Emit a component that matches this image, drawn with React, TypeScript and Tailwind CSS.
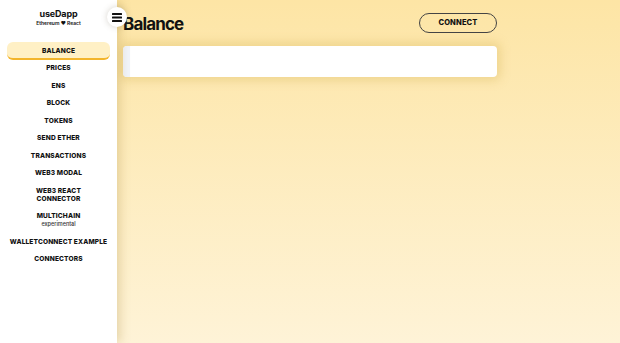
import React from 'react';

const navItems: { label: string[]; sub?: string }[] = [
  { label: ['Balance'] },
  { label: ['Prices'] },
  { label: ['ENS'] },
  { label: ['Block'] },
  { label: ['Tokens'] },
  { label: ['Send Ether'] },
  { label: ['Transactions'] },
  { label: ['Web3 Modal'] },
  { label: ['Web3 React', 'Connector'] },
  { label: ['Multichain'], sub: 'experimental' },
  { label: ['WalletConnect Example'] },
  { label: ['Connectors'] },
];

const MenuIcon = () => (
  <svg width="10" height="9" viewBox="0 0 10 9" fill="#111">
    <rect x="0" y="0" width="10" height="2" rx="0.5" />
    <rect x="0" y="3.5" width="10" height="2" rx="0.5" />
    <rect x="0" y="7" width="10" height="2" rx="0.5" />
  </svg>
);

export default function App() {
  return (
    <div
      className="flex h-[343px] w-[620px] overflow-hidden text-[#111]"
      style={{ fontFamily: 'Inter, "Liberation Sans", sans-serif' }}
    >
      {/* Sidebar */}
      <aside className="relative z-10 w-[117px] shrink-0 bg-white px-[7px] shadow-[3px_0_10px_rgba(170,140,60,0.3)]">
        <div className="flex flex-col items-center pt-[8px]">
          <div className="text-[9px] font-bold leading-[12px] tracking-[-0.02em]">useDapp</div>
          <div className="text-[5px] font-semibold leading-[7px]">Ethereum ❤︎ React</div>
        </div>

        <nav className="mt-[15px] flex flex-col">
          {navItems.map((item, i) => (
            <div
              key={i}
              className={
                i === 0
                  ? 'flex flex-col items-center rounded-md border-b-2 border-[#f3b52c] bg-[#fff0c5] pt-[4.75px] pb-[2.75px]'
                  : 'flex flex-col items-center py-[4.75px]'
              }
            >
              {item.label.map((l) => (
                <span key={l} className="text-[6.6px] font-extrabold uppercase leading-[8px] tracking-[0.02em]">
                  {l}
                </span>
              ))}
              {item.sub && (
                <span className="text-[5.5px] font-medium leading-[8px] text-[#333]">{item.sub}</span>
              )}
            </div>
          ))}
        </nav>

        <button className="absolute right-[-10px] top-[7px] flex h-[20px] w-[20px] items-center justify-center rounded-full bg-white shadow-[0_0_6px_rgba(120,110,90,0.3)]">
          <MenuIcon />
        </button>
      </aside>

      {/* Main */}
      <main className="flex-1 bg-gradient-to-b from-[#fde5a5] to-[#fef3d7] pl-[6px]">
        <div className="w-[374px]">
          <header className="flex h-[46px] items-start justify-between pt-[13px]">
            <h1 className="text-[17px] font-bold leading-[22px] tracking-[-0.05em]">Balance</h1>
            <button className="flex h-[20px] w-[78px] items-center justify-center rounded-full border-[1.5px] border-[#444] text-[7.5px] font-extrabold uppercase tracking-[0.02em]">
              Connect
            </button>
          </header>

          <section className="flex h-[31px] overflow-hidden rounded-[4px] bg-white shadow-[0_0_10px_4px_rgba(215,180,90,0.35)]">
            <div className="w-[7px] bg-[#f1f4fb]" />
            <div className="flex-1" />
          </section>
        </div>
      </main>
    </div>
  );
}
